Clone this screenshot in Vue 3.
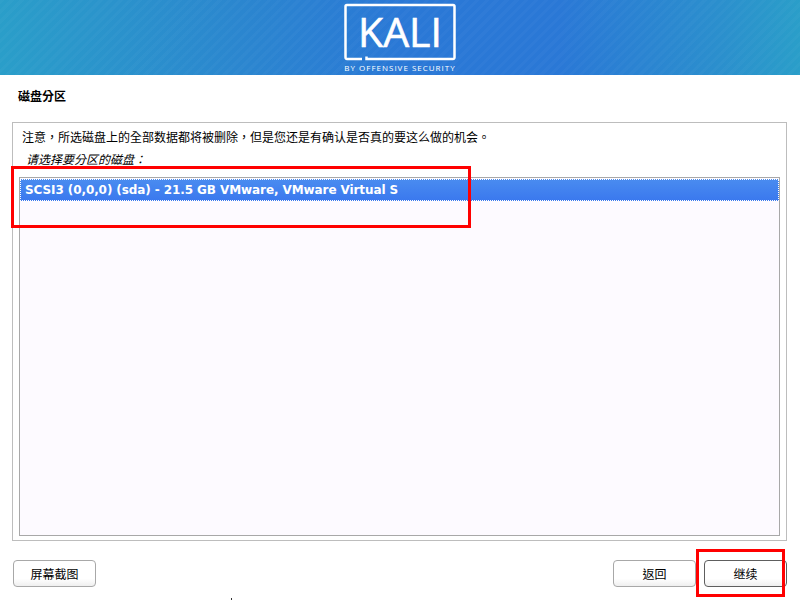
<template>
  <div class="page">
    <header class="banner">
      <svg class="logo" width="114" height="75" viewBox="0 0 114 75">
        <path d="M19 59H4a1.500 1.500 0 0 1-1.500-1.500V6.500A1.500 1.500 0 0 1 4 5H110a1.500 1.500 0 0 1 1.500 1.500v51a1.500 1.500 0 0 1-1.500 1.500H23.500v-2.500" fill="none" stroke="#fff" stroke-width="2.500" />
        <text x="57" y="47" text-anchor="middle" class="logo-word">KALI</text>
        <text x="57" y="71" text-anchor="middle" class="logo-sub">BY OFFENSIVE SECURITY</text>
      </svg>
    </header>
    <main class="content">
      <h1 class="title">磁盘分区</h1>
      <section class="panel">
        <p class="note">注意，所选磁盘上的全部数据都将被删除，但是您还是有确认是否真的要这么做的机会。</p>
        <p class="prompt">请选择要分区的磁盘：</p>
        <div class="list">
          <div class="row">SCSI3 (0,0,0) (sda) - 21.5 GB VMware, VMware Virtual S</div>
        </div>
      </section>
      <footer class="actions">
        <button class="btn">屏幕截图</button>
        <div class="right">
          <button class="btn">返回</button>
          <button class="btn active">继续</button>
        </div>
      </footer>
    </main>
    <div class="mark mark-list"></div>
    <div class="mark mark-next"></div>
    <div class="speck"></div>
  </div>
</template>

<script setup>
</script>

<style>
html, body {
  background: #fff;
}
</style>

<style scoped>
.page {
  position: relative;
  width: 800px;
  height: 600px;
  overflow: hidden;
  background: #fff;
  font-family: "DejaVu Sans", "Noto Sans CJK TC", sans-serif;
  color: #000;
}
.banner {
  height: 75px;
  display: flex;
  justify-content: center;
  background:
    repeating-linear-gradient(135deg, rgba(255, 255, 255, 0.025) 0 3px, rgba(255, 255, 255, 0) 3px 7px),
    linear-gradient(90deg, #2a9ec9 0%, #2b86cf 30%, #2a78d6 50%, #2a78d6 70%, #2b8fcd 90%, #2a9ec9 100%);
}
.logo {
  display: block;
}
.logo-word {
  font-family: "Open Sans", sans-serif;
  font-size: 41px;
  font-weight: 400;
  fill: #fff;
  stroke: #fff;
  stroke-width: 0.6px;
}
.logo-sub {
  font-family: "Open Sans", sans-serif;
  font-size: 8px;
  letter-spacing: 1px;
  fill: #fff;
}
.content {
  padding: 15px 13px 0 12px;
}
.title {
  margin: 0;
  height: 32px;
  padding-left: 6px;
  font-size: 12px;
  line-height: 15px;
  font-weight: 700;
}
.panel {
  box-sizing: border-box;
  height: 419px;
  padding: 7px 6px 4px;
  border: 1px solid #bdbdbd;
  display: flex;
  flex-direction: column;
}
.note {
  margin: 0 0 0 3px;
  font-size: 12px;
  line-height: 16px;
}
.prompt {
  margin: 6px 0 9px 7px;
  font-size: 12px;
  line-height: 16px;
  font-style: italic;
}
.list {
  flex: 1;
  border: 1px solid #a8a8a8;
  background: #fdfaff;
}
.row {
  height: 22px;
  margin: 1px 0 0 0;
  padding-left: 5px;
  font-size: 12px;
  font-weight: 700;
  line-height: 22px;
  letter-spacing: -0.09px;
  color: #fff;
  background: linear-gradient(#4a8cf0, #3a78ee);
  outline: 1px dotted #fff;
  outline-offset: -1px;
}
.actions {
  margin-top: 19px;
  padding-left: 1px;
  display: flex;
  justify-content: space-between;
}
.right {
  display: flex;
  gap: 8px;
}
.btn {
  width: 83px;
  height: 27px;
  padding: 0;
  border: 1px solid #a8a8a8;
  border-radius: 4px;
  background: linear-gradient(#fff 70%, #efefef);
  font-family: inherit;
  font-size: 12px;
  color: #000;
}
.active {
  border-color: #5e5e5e;
}
.mark {
  position: absolute;
  box-sizing: border-box;
  border: 3px solid #f00;
}
.mark-list {
  left: 11px;
  top: 166px;
  width: 460px;
  height: 62px;
}
.mark-next {
  left: 696px;
  top: 549px;
  width: 89px;
  height: 48px;
}
.speck {
  position: absolute;
  left: 231px;
  top: 598px;
  width: 1px;
  height: 2px;
  background: #333;
}
</style>
